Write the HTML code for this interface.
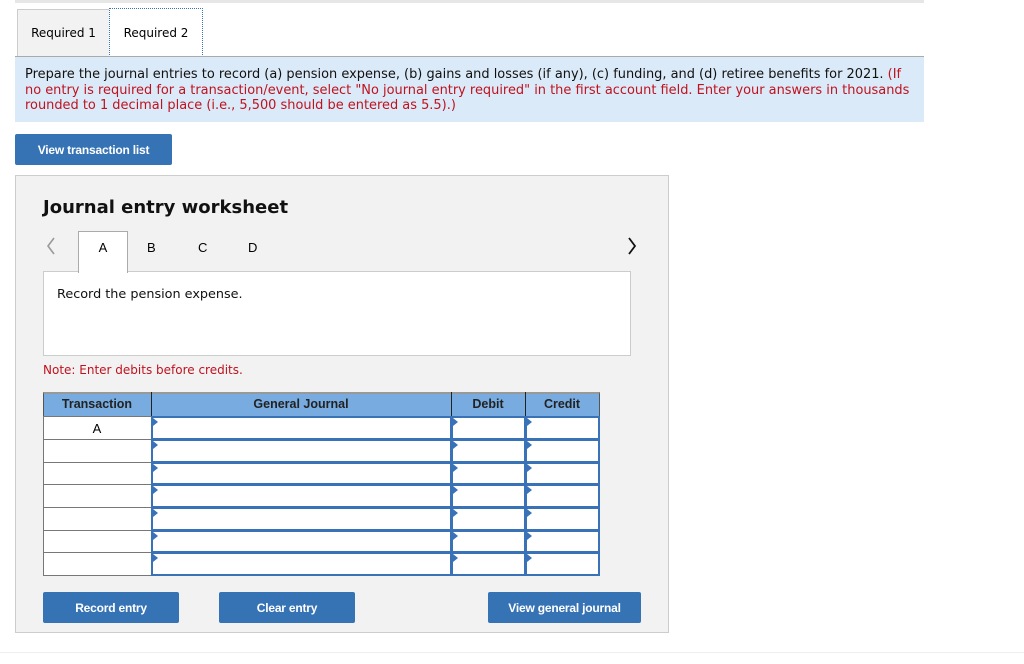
<!DOCTYPE html>
<html><head><style>
*{margin:0;padding:0;box-sizing:border-box}
body{width:1024px;height:664px;background:#fff;position:relative;overflow:hidden;font-family:"DejaVu Sans","Liberation Sans",sans-serif;}
.a{position:absolute}
.btn{position:absolute;background:#3673b5;color:#fff;font-family:"Liberation Sans",sans-serif;font-weight:bold;font-size:12px;display:flex;align-items:center;justify-content:center;border-radius:2px;letter-spacing:-0.2px}
.tri{position:absolute;width:0;height:0;border-top:4px solid transparent;border-bottom:4px solid transparent;border-left:5px solid #3a72b8}
</style></head><body>
<div class="a" style="left:15px;top:0;width:909px;height:3px;background:#e6e6e6"></div>
<div class="a" style="left:17px;top:9px;width:93px;height:48px;background:#f2f2f2;border:1px solid #ccc;font-size:12px;line-height:47px;text-align:center;font-family:'DejaVu Sans',sans-serif">Required 1</div>
<div class="a" style="left:109px;top:8px;width:94px;height:49px;background:#fff;border:1px dotted #3a72b8;border-bottom:none;font-size:12px;line-height:49px;text-align:center">Required 2</div>
<div class="a" style="left:15px;top:56px;width:909px;height:1px;background:#aaa"></div>
<div class="a" style="left:15px;top:57px;width:909px;height:65px;background:#dbeaf8"></div>
<div class="a" style="left:25px;top:67px;width:892px;font-size:12.95px;line-height:15.5px;color:#111">Prepare the journal entries to record (a) pension expense, (b) gains and losses (if any), (c) funding, and (d) retiree benefits for 2021. <span style="color:#c0121e">(If no entry is required for a transaction/event, select "No journal entry required" in the first account field. Enter your answers in thousands rounded to 1 decimal place (i.e., 5,500 should be entered as 5.5).)</span></div>
<div class="btn" style="left:15px;top:134px;width:157px;height:31px">View transaction list</div>

<div class="a" style="left:15px;top:175px;width:654px;height:458px;background:#f2f2f2;border:1px solid #ccc"></div>
<div class="a" style="left:43px;top:197px;font-size:18px;font-weight:bold;color:#111">Journal entry worksheet</div>
<svg class="a" style="left:45px;top:236px" width="12" height="20"><path d="M9 2 L3 10 L9 18" stroke="#999" stroke-width="1.6" fill="none"/></svg>
<svg class="a" style="left:626px;top:236px" width="12" height="20"><path d="M3 2 L9 10 L3 18" stroke="#111" stroke-width="1.8" fill="none"/></svg>
<div class="a" style="left:43px;top:271px;width:588px;height:85px;background:#fff;border:1px solid #ccc"></div>
<div class="a" style="left:78px;top:231px;width:50px;height:42px;background:#fff;border:1px solid #aaa;border-bottom:none"></div>
<div class="a" style="left:78px;top:240px;width:50px;text-align:center;font-family:'Liberation Sans',sans-serif;font-size:13px">A</div>
<div class="a" style="left:147px;top:240px;font-family:'Liberation Sans',sans-serif;font-size:13px">B</div>
<div class="a" style="left:198px;top:240px;font-family:'Liberation Sans',sans-serif;font-size:13px">C</div>
<div class="a" style="left:248px;top:240px;font-family:'Liberation Sans',sans-serif;font-size:13px">D</div>
<div class="a" style="left:57px;top:287px;font-size:12.8px;color:#111">Record the pension expense.</div>
<div class="a" style="left:43px;top:363px;font-size:12px;color:#c0121e">Note: Enter debits before credits.</div>

<div class="a" style="left:43px;top:392px;width:557px;height:25px;background:#78ace0;border:1px solid #555;border-top:2px solid #999"></div>
<div class="a" style="left:151px;top:392px;width:1px;height:25px;background:#222"></div>
<div class="a" style="left:451px;top:392px;width:1px;height:25px;background:#222"></div>
<div class="a" style="left:525px;top:392px;width:1px;height:25px;background:#222"></div>
<div class="a" style="left:43px;top:397px;width:108px;text-align:center;font-family:'Liberation Sans',sans-serif;font-weight:bold;font-size:12.5px;color:#222">Transaction</div>
<div class="a" style="left:151px;top:397px;width:300px;text-align:center;font-family:'Liberation Sans',sans-serif;font-weight:bold;font-size:12.5px;color:#222">General Journal</div>
<div class="a" style="left:451px;top:397px;width:74px;text-align:center;font-family:'Liberation Sans',sans-serif;font-weight:bold;font-size:12.5px;color:#222">Debit</div>
<div class="a" style="left:525px;top:397px;width:74px;text-align:center;font-family:'Liberation Sans',sans-serif;font-weight:bold;font-size:12.5px;color:#222">Credit</div>

<div id="rows"></div>
<script>
var tops=[416,439,462,484,507,530,552,575],h='';
for(var i=0;i<7;i++){var t=tops[i],hh=tops[i+1]-t;
h+='<div class="a" style="left:43px;top:'+t+'px;width:109px;height:'+(hh+1)+'px;background:#fff;border:1px solid #777"></div>';
[[151,301],[451,75],[525,75]].forEach(function(c){
h+='<div class="a" style="left:'+c[0]+'px;top:'+t+'px;width:'+c[1]+'px;height:'+(hh+1)+'px;background:#fff;border:2px solid #3a72b8"></div>';
h+='<div class="tri" style="left:'+(c[0]+2)+'px;top:'+(t+2)+'px"></div>';});
}
h+='<div class="a" style="left:43px;top:421px;width:108px;text-align:center;font-family:\'Liberation Sans\',sans-serif;font-size:13px">A</div>';
document.getElementById('rows').innerHTML=h;
</script>

<div class="btn" style="left:43px;top:592px;width:136px;height:31px">Record entry</div>
<div class="btn" style="left:219px;top:592px;width:136px;height:31px">Clear entry</div>
<div class="btn" style="left:488px;top:592px;width:153px;height:31px">View general journal</div>
<div class="a" style="left:0;top:652px;width:1024px;height:1px;background:#eee"></div>
</body></html>
